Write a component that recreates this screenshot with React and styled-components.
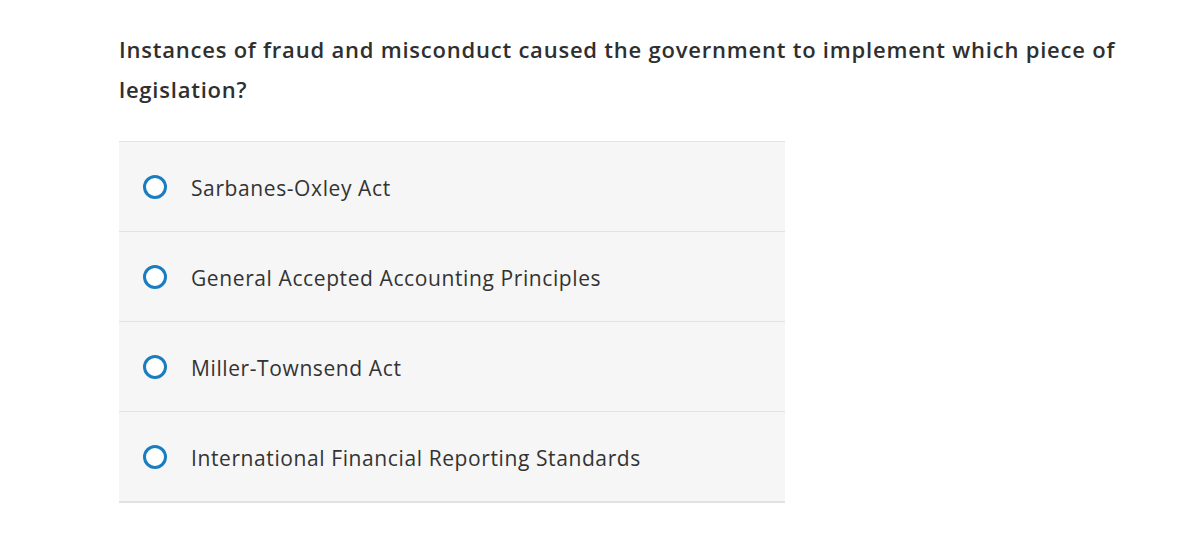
import React from "react";
import styled, { createGlobalStyle } from "styled-components";

const GlobalStyle = createGlobalStyle`
    body {
        margin: 0;
        background: #fff;
        font-family: "Open Sans", sans-serif;
        color: #333;
    }
`;

const Page = styled.div`
    padding: 29px 0 0 119px;
`;

const Question = styled.h1`
    margin: 0 0 32px;
    width: 1010px;
    font-size: 22px;
    font-weight: 600;
    letter-spacing: 0.78px;
    line-height: 40px;
    color: #2f2f2f;
`;

const Options = styled.div`
    width: 666px;
    border-top: 1px solid #e2e2e2;
`;

const Option = styled.label`
    display: flex;
    align-items: center;
    gap: 24px;
    height: 89px;
    padding-left: 24px;
    background: #f6f6f6;
    border-bottom: ${(p) => (p.$last ? "2px" : "1px")} solid #e2e2e2;
    cursor: pointer;
`;

const Radio = styled.span`
    box-sizing: border-box;
    width: 24px;
    height: 24px;
    border: 3px solid #1a7dc0;
    border-radius: 50%;
    background: #fff;
    flex-shrink: 0;
`;

const OptionText = styled.span`
    font-size: 21px;
    letter-spacing: 0.6px;
    color: #333;
    padding-top: 2px;
`;

const answers = [
    "Sarbanes-Oxley Act",
    "General Accepted Accounting Principles",
    "Miller-Townsend Act",
    "International Financial Reporting Standards",
];

export default function App() {
    return (
        <>
            <GlobalStyle />
            <Page>
                <Question>
                    Instances of fraud and misconduct caused the government to
                    implement which piece of legislation?
                </Question>
                <Options>
                    {answers.map((a, i) => (
                        <Option key={a} $last={i === answers.length - 1}>
                            <Radio />
                            <OptionText>{a}</OptionText>
                        </Option>
                    ))}
                </Options>
            </Page>
        </>
    );
}
